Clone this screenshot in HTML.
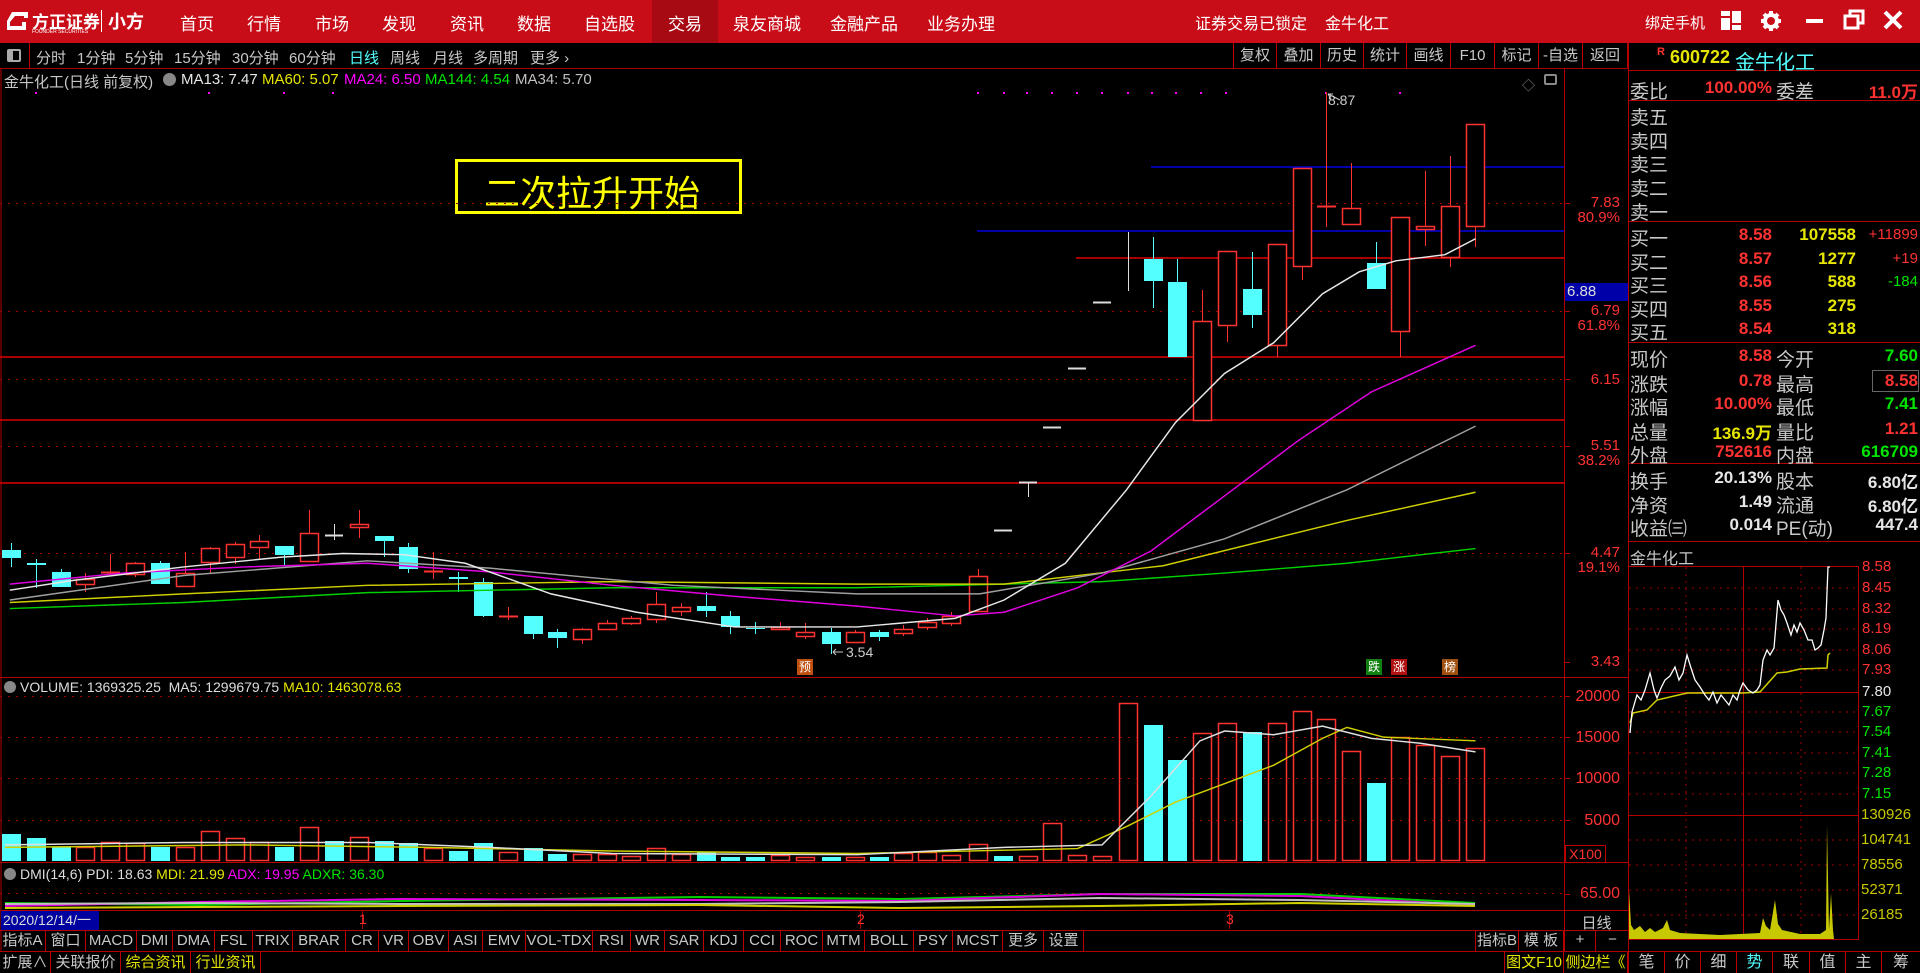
<!DOCTYPE html>
<html><head><meta charset="utf-8">
<style>
*{margin:0;padding:0;box-sizing:border-box}
body{width:1920px;height:973px;background:#000;overflow:hidden;position:relative;font-family:"Liberation Sans","Noto Sans CJK SC",sans-serif;color:#c8c8c8}
.a{position:absolute;white-space:nowrap}
#top{position:absolute;left:0;top:0;width:1920px;height:43px;background:#c80d18}
.nav{position:absolute;top:10px;font-size:17px;color:#fff}
#tb{position:absolute;left:0;top:43px;width:1628px;height:26px;border-bottom:1px solid #a00;font-size:15px}
.ti{position:absolute;top:4px;color:#c8c8c8}
.rb{position:absolute;top:0;height:25px;border-left:1px solid #b00;font-size:15px;text-align:center;line-height:25px;color:#c8c8c8}
.rp{position:absolute;font-size:19px;line-height:22px}
.lab{color:#c8c8c8}
.num{font-weight:bold;font-size:17px}
.r{color:#ff3232}.y{color:#e6e600}.g{color:#00e600}.w{color:#e6e6e6}.c{color:#54ffff}
.tab{position:absolute;top:931px;height:20px;border-right:1px solid #b00;font-size:15px;line-height:20px;text-align:center;color:#c8c8c8}
.bt{position:absolute;top:952px;height:21px;border-right:1px solid #b00;font-size:15px;line-height:21px;text-align:center}
.ax{position:absolute;font-size:15px;color:#ff3232;text-align:right;width:60px}
.iax{position:absolute;font-size:15px;left:1862px}
.bx{position:absolute;font-size:12px;color:#fff;width:16px;height:16px;text-align:center;line-height:16px}
</style></head><body>

<div id="top">
 <svg class="a" style="left:6px;top:10px" width="24" height="22" viewBox="0 0 24 22"><path d="M6 2h16v6h-4V6H9L4 12v4h12v-4h4v8H1V11z" fill="#fff"/></svg>
 <div class="a" style="left:32px;top:8px;font-size:17px;font-weight:bold;color:#fff">方正证券</div>
 <div class="a" style="left:32px;top:29px;font-size:5px;color:#fff">FOUNDER SECURITIES</div>
 <div class="a" style="left:101px;top:10px;width:1px;height:22px;background:#fff"></div>
 <div class="a" style="left:108px;top:8px;font-size:18px;font-weight:bold;color:#fff">小方</div>
 <div class="nav" style="left:180px">首页</div>
 <div class="nav" style="left:247px">行情</div>
 <div class="nav" style="left:315px">市场</div>
 <div class="nav" style="left:382px">发现</div>
 <div class="nav" style="left:450px">资讯</div>
 <div class="nav" style="left:517px">数据</div>
 <div class="nav" style="left:584px">自选股</div>
 <div class="a" style="left:652px;top:0;width:66px;height:43px;background:#a80a14"></div>
 <div class="nav" style="left:668px">交易</div>
 <div class="nav" style="left:733px">泉友商城</div>
 <div class="nav" style="left:830px">金融产品</div>
 <div class="nav" style="left:927px">业务办理</div>
 <div class="nav" style="left:1195px;font-size:16px">证券交易已锁定</div>
 <div class="nav" style="left:1325px;font-size:16px">金牛化工</div>
 <div class="nav" style="left:1645px;font-size:15px;top:12px">绑定手机</div>
 <svg class="a" style="left:1720px;top:10px" width="22" height="22"><rect x="1" y="1" width="9" height="5" fill="#fff"/><rect x="1" y="8" width="9" height="12" fill="#fff"/><rect x="12" y="1" width="9" height="12" fill="#fff"/><rect x="12" y="15" width="9" height="5" fill="#fff"/></svg>
 <svg class="a" style="left:1760px;top:10px" width="22" height="22" viewBox="0 0 22 22"><circle cx="11" cy="11" r="6" fill="none" stroke="#fff" stroke-width="4"/><g stroke="#fff" stroke-width="4"><path d="M11 1v4M11 17v4M1 11h4M17 11h4M4 4l3 3M15 15l3 3M18 4l-3 3M4 18l3-3"/></g></svg>
 <div class="a" style="left:1806px;top:19px;width:17px;height:4px;background:#fff"></div>
 <svg class="a" style="left:1843px;top:9px" width="22" height="22"><rect x="2" y="7" width="13" height="12" fill="none" stroke="#fff" stroke-width="3"/><path d="M7 7V2h13v12h-5" fill="none" stroke="#fff" stroke-width="3"/></svg>
 <svg class="a" style="left:1883px;top:10px" width="20" height="20"><path d="M2 2L18 18M18 2L2 18" stroke="#fff" stroke-width="4"/></svg>
</div>

<div id="tb">
 <div class="a" style="left:7px;top:6px;width:14px;height:13px;border:2px solid #aaa;border-radius:2px"></div>
 <div class="a" style="left:8px;top:8px;width:5px;height:9px;background:#aaa"></div>
 <div class="a" style="left:29px;top:0;width:1px;height:26px;background:#b00"></div>
 <div class="ti" style="left:36px">分时</div>
 <div class="ti" style="left:77px">1分钟</div>
 <div class="ti" style="left:125px">5分钟</div>
 <div class="ti" style="left:174px">15分钟</div>
 <div class="ti" style="left:232px">30分钟</div>
 <div class="ti" style="left:289px">60分钟</div>
 <div class="ti c" style="left:349px">日线</div>
 <div class="ti" style="left:390px">周线</div>
 <div class="ti" style="left:433px">月线</div>
 <div class="ti" style="left:473px">多周期</div>
 <div class="ti" style="left:530px">更多 ›</div>
 <div class="rb" style="left:1233px;width:43px">复权</div>
 <div class="rb" style="left:1276px;width:44px">叠加</div>
 <div class="rb" style="left:1320px;width:43px">历史</div>
 <div class="rb" style="left:1363px;width:43px">统计</div>
 <div class="rb" style="left:1406px;width:44px">画线</div>
 <div class="rb" style="left:1450px;width:44px">F10</div>
 <div class="rb" style="left:1494px;width:44px">标记</div>
 <div class="rb" style="left:1538px;width:44px">-自选</div>
 <div class="rb" style="left:1582px;width:46px;border-right:1px solid #b00">返回</div>
</div>

<!-- title line -->
<div class="a" style="left:4px;top:71px;font-size:15px;color:#c8c8c8">金牛化工(日线 前复权)</div>
<div class="a" style="left:163px;top:73px;width:13px;height:13px;border-radius:50%;background:#888"></div>
<div class="a w" style="left:181px;top:71px;font-size:15px">MA13: 7.47</div>
<div class="a y" style="left:262px;top:71px;font-size:15px">MA60: 5.07</div>
<div class="a" style="left:344px;top:71px;font-size:15px;color:#ff00ff">MA24: 6.50</div>
<div class="a g" style="left:425px;top:71px;font-size:15px">MA144: 4.54</div>
<div class="a" style="left:515px;top:71px;font-size:15px;color:#c0c0c0">MA34: 5.70</div>

<div class="a" style="left:455px;top:159px;width:287px;height:55px;border:3px solid #ffff00"></div>
<div class="a" style="left:484px;top:165px;font-size:36px;color:#ffff00">二次拉升开始</div>

<svg class="a" style="left:0;top:0" width="1920" height="973" id="sv">
 <!-- frames -->
 <g stroke="#b00000" fill="none">
  <line x1="1564.5" y1="69" x2="1564.5" y2="952"/>
  <line x1="1628.5" y1="43" x2="1628.5" y2="973"/>
  <line x1="0" y1="677.5" x2="1628" y2="677.5"/>
  <line x1="0" y1="862.5" x2="1628" y2="862.5"/>
  <line x1="0" y1="910.5" x2="1628" y2="910.5"/>
  <line x1="0" y1="930.5" x2="1628" y2="930.5"/>
  <line x1="0" y1="951.5" x2="1920" y2="951.5"/>
  <line x1="1" y1="69" x2="1" y2="952"/>
  <line x1="1628" y1="70.5" x2="1920" y2="70.5"/>
  <line x1="1628" y1="100.5" x2="1920" y2="100.5"/>
  <line x1="1628" y1="221.5" x2="1920" y2="221.5"/>
  <line x1="1628" y1="342.5" x2="1920" y2="342.5"/>
  <line x1="1628" y1="463.5" x2="1920" y2="463.5"/>
  <line x1="1628" y1="541.5" x2="1920" y2="541.5"/>
 </g>
 <!-- dotted grid -->
 <g stroke="#a00000" stroke-dasharray="2,6">
  <line x1="0" y1="203.5" x2="1564" y2="203.5"/><line x1="0" y1="311.5" x2="1564" y2="311.5"/>
  <line x1="0" y1="379.5" x2="1564" y2="379.5"/><line x1="0" y1="446.5" x2="1564" y2="446.5"/>
  <line x1="0" y1="553.5" x2="1564" y2="553.5"/>
  <line x1="0" y1="696.5" x2="1564" y2="696.5"/><line x1="0" y1="737.5" x2="1564" y2="737.5"/>
  <line x1="0" y1="778.5" x2="1564" y2="778.5"/><line x1="0" y1="820.5" x2="1564" y2="820.5"/>
  <line x1="0" y1="893.5" x2="1564" y2="893.5"/>
 </g>
 <!-- axis ticks -->
 <g stroke="#b00000"><path d="M1564 203.5h6M1564 311.5h6M1564 379.5h6M1564 446.5h6M1564 553.5h6M1564 662.5h6M1564 696.5h6M1564 737.5h6M1564 778.5h6M1564 820.5h6M1564 894.5h6M362.5 911v18M860.5 911v18M1229.5 911v18"/></g>
 <!-- horizontal marker lines -->
 <g stroke="#e00000" stroke-width="1.5">
  <line x1="1076" y1="258" x2="1564" y2="258"/>
  <line x1="0" y1="357" x2="1564" y2="357"/>
  <line x1="0" y1="420" x2="1564" y2="420"/>
  <line x1="0" y1="483" x2="1564" y2="483"/>
 </g>
 <g stroke="#0000e0" stroke-width="1.5">
  <line x1="1151" y1="167" x2="1564" y2="167"/>
  <line x1="977" y1="231" x2="1564" y2="231"/>
 </g>
 <g id="dots" fill="#ff00ff"></g>
 <g id="cands"></g>
 <g id="vols"></g>
 <!-- MA lines (perceived coords scaled) -->
 <g transform="scale(1.2245)" fill="none" stroke-width="1.2" vector-effect="non-scaling-stroke">
  <polyline stroke="#00d000" points="8,497 150,492 300,484 500,480 700,480 900,475 1000,468 1100,460 1205,448"/>
  <polyline stroke="#d0d000" points="8,492 150,485 300,478 500,475 700,477 820,477 950,462 1100,425 1205,402"/>
  <polyline stroke="#a0a0a0" points="8,490 150,470 300,458 400,464 550,478 700,485 800,485 900,468 1000,440 1100,400 1205,348"/>
  <polyline stroke="#e000e0" points="8,477 100,468 200,463 300,460 400,467 500,478 600,487 700,495 780,503 820,500 880,480 940,450 1000,405 1060,360 1120,320 1205,282"/>
  <polyline stroke="#e8e8e8" points="8,482 60,474 150,463 230,455 280,452 330,453 380,460 450,485 520,500 600,512 700,512 780,505 820,490 870,460 920,400 960,345 1000,305 1040,280 1080,240 1110,222 1140,213 1180,208 1205,195"/>
  <polyline stroke="#d0d000" points="4,692 200,690 350,692 500,695 700,697 880,693 920,675 960,655 1000,640 1040,625 1080,603 1100,594 1130,602 1205,605"/>
  <polyline stroke="#e0e0e0" points="4,690 150,688 300,688 400,692 500,697 700,698 820,692 900,690 940,650 980,605 1000,597 1040,600 1080,593 1120,603 1160,607 1205,614"/>
 </g>
 <!-- DMI lines -->
 <g fill="none" stroke-width="2">
  <polyline stroke="#00d000" points="5,903 200,905 400,901 700,897 900,899 1100,894 1300,894 1475,903"/>
  <polyline stroke="#e000e0" points="5,906 200,902 400,899 700,900 900,901 1100,894 1300,896 1475,905"/>
  <polyline stroke="#c0c0c0" points="5,904 200,903 400,904 700,904 900,902 1100,898 1300,900 1475,904"/>
  <polyline stroke="#d0d000" points="5,908 200,907 400,906 700,905 900,908 1100,906 1300,903 1475,906"/>
 </g>
 <!-- 8.87 / 3.54 arrows -->
 <path d="M1328 94l12 6M1328 94l3 5M1328 94l5 0" stroke="#ccc" fill="none"/>
 <path d="M833 652h10M833 652l3-3M833 652l3 3" stroke="#ccc" fill="none"/>
 <!-- intraday chart -->
 <g stroke="#b00000" fill="none">
  <rect x="1628.5" y="566.5" width="230" height="373"/>
  <line x1="1628" y1="692.5" x2="1858" y2="692.5"/>
  <line x1="1628" y1="815.5" x2="1858" y2="815.5"/>
  <line x1="1743.5" y1="567" x2="1743.5" y2="939"/>
 </g>
 <g stroke="#a00000" stroke-dasharray="2,5">
  <path d="M1629 588h229M1629 609h229M1629 629h229M1629 650h229M1629 670h229M1629 712h229M1629 732h229M1629 753h229M1629 773h229M1629 794h229M1629 840h229M1629 865h229M1629 890h229M1629 915h229M1686 567v372M1801 567v372"/>
 </g>
 <polyline fill="none" stroke="#d0d000" stroke-width="1.5" points="1630,723 1633,713 1647,710 1657,700 1687,693 1743,693 1760,692 1777,673 1787,672 1800,669 1827,668 1828,655 1830,653"/>
 <polyline fill="none" stroke="#fff" stroke-width="1.3" points="1630,733 1632,712 1637,695 1641,700 1645,690 1650,673 1654,690 1657,698 1661,688 1665,680 1670,676 1675,667 1679,680 1683,673 1687,655 1691,668 1695,680 1700,687 1705,695 1709,700 1713,692 1717,703 1721,695 1725,700 1729,705 1733,695 1737,700 1740,690 1743,683 1748,690 1753,693 1757,690 1760,685 1763,660 1767,650 1770,655 1774,648 1778,600 1781,610 1784,615 1787,623 1791,635 1794,625 1797,632 1800,623 1804,630 1808,640 1812,640 1815,650 1818,648 1821,645 1824,630 1826,618 1828,567 1830,567"/>
 <path fill="#c8c800" d="M1629 939V890L1631 925L1634 930L1640 926L1645 932L1650 928L1655 932L1663 928L1667 920L1670 930L1680 933L1700 934L1720 935L1740 934L1760 933L1763 918L1766 926L1770 930L1775 900L1778 924L1782 930L1800 934L1820 934L1826 930L1827 825L1829 930L1831 893L1833 930L1834 939Z"/>
</svg>

<div class="a" style="left:1328px;top:92px;font-size:14px;color:#ccc">8.87</div>
<div class="a" style="left:846px;top:644px;font-size:14px;color:#ccc">3.54</div>
<div class="bx" style="left:797px;top:659px;background:#c05010">预</div>
<div class="bx" style="left:1366px;top:659px;background:#108010">跌</div>
<div class="bx" style="left:1391px;top:659px;background:#b01010">涨</div>
<div class="bx" style="left:1442px;top:659px;background:#a05010">榜</div>
<div class="a" style="left:1522px;top:75px;font-size:13px;color:#888">◇</div>
<div class="a" style="left:1544px;top:74px;width:13px;height:11px;border:2px solid #888;border-radius:2px"></div>

<!-- price axis -->
<div class="ax" style="left:1560px;top:194px">7.83</div>
<div class="ax" style="left:1560px;top:209px">80.9%</div>
<div class="a" style="left:1565px;top:283px;width:63px;height:18px;background:#0000a8;font-size:15px;color:#ddd;line-height:18px;padding-left:2px">6.88</div>
<div class="ax" style="left:1560px;top:302px">6.79</div>
<div class="ax" style="left:1560px;top:317px">61.8%</div>
<div class="ax" style="left:1560px;top:371px">6.15</div>
<div class="ax" style="left:1560px;top:437px">5.51</div>
<div class="ax" style="left:1560px;top:452px">38.2%</div>
<div class="ax" style="left:1560px;top:544px">4.47</div>
<div class="ax" style="left:1560px;top:559px">19.1%</div>
<div class="ax" style="left:1560px;top:653px">3.43</div>
<div class="ax" style="left:1560px;top:688px;font-size:16px">20000</div>
<div class="ax" style="left:1560px;top:729px;font-size:16px">15000</div>
<div class="ax" style="left:1560px;top:770px;font-size:16px">10000</div>
<div class="ax" style="left:1560px;top:812px;font-size:16px">5000</div>
<div class="a" style="left:1565px;top:845px;width:41px;height:18px;border:1px solid #b00;font-size:14px;color:#ff3232;line-height:16px;text-align:center">X100</div>
<div class="ax" style="left:1560px;top:885px;font-size:16px">65.00</div>
<div class="a" style="left:1565px;top:912px;width:63px;text-align:center;font-size:15px">日线</div>
<div class="a" style="left:1565px;top:931px;width:31px;height:20px;border-right:1px solid #b00;text-align:center;font-size:15px">+</div>
<div class="a" style="left:1597px;top:931px;width:31px;text-align:center;font-size:15px">−</div>

<!-- volume/dmi titles -->
<div class="a" style="left:4px;top:681px;width:12px;height:12px;border-radius:50%;background:#888"></div>
<div class="a" style="left:20px;top:679px;font-size:14px;color:#ddd">VOLUME: 1369325.25 &nbsp;MA5: 1299679.75 <span class="y">MA10: 1463078.63</span></div>
<div class="a" style="left:4px;top:868px;width:12px;height:12px;border-radius:50%;background:#888"></div>
<div class="a" style="left:20px;top:866px;font-size:14px;color:#ddd">DMI(14,6) PDI: 18.63 <span class="y">MDI: 21.99</span> <span style="color:#ff00ff">ADX: 19.95</span> <span class="g">ADXR: 36.30</span></div>

<!-- date row -->
<div class="a" style="left:1px;top:911px;width:98px;height:19px;background:#0000a0;color:#ddd;font-size:14px;line-height:19px;padding-left:2px">2020/12/14/一</div>
<div class="a r" style="left:359px;top:911px;font-size:14px">1</div>
<div class="a r" style="left:857px;top:911px;font-size:14px">2</div>
<div class="a r" style="left:1226px;top:911px;font-size:14px">3</div>

<!-- tabs -->
<div class="tab" style="left:0;width:46px">指标A</div>
<div class="tab" style="left:46px;width:40px">窗口</div>
<div class="tab" style="left:86px;width:51px">MACD</div>
<div class="tab c" style="left:137px;width:36px">DMI</div>
<div class="tab" style="left:173px;width:42px">DMA</div>
<div class="tab" style="left:215px;width:38px">FSL</div>
<div class="tab" style="left:253px;width:40px">TRIX</div>
<div class="tab" style="left:293px;width:53px">BRAR</div>
<div class="tab" style="left:346px;width:33px">CR</div>
<div class="tab" style="left:379px;width:30px">VR</div>
<div class="tab" style="left:409px;width:40px">OBV</div>
<div class="tab" style="left:449px;width:34px">ASI</div>
<div class="tab" style="left:483px;width:43px">EMV</div>
<div class="tab" style="left:526px;width:67px">VOL-TDX</div>
<div class="tab" style="left:593px;width:38px">RSI</div>
<div class="tab" style="left:631px;width:34px">WR</div>
<div class="tab" style="left:665px;width:39px">SAR</div>
<div class="tab" style="left:704px;width:40px">KDJ</div>
<div class="tab" style="left:744px;width:37px">CCI</div>
<div class="tab" style="left:781px;width:42px">ROC</div>
<div class="tab" style="left:823px;width:42px">MTM</div>
<div class="tab" style="left:865px;width:49px">BOLL</div>
<div class="tab" style="left:914px;width:39px">PSY</div>
<div class="tab" style="left:953px;width:50px">MCST</div>
<div class="tab" style="left:1003px;width:41px">更多</div>
<div class="tab" style="left:1044px;width:40px">设置</div>
<div class="tab" style="left:1475px;width:44px;border-left:1px solid #b00">指标B</div>
<div class="tab" style="left:1519px;width:45px">模 板</div>

<div class="bt" style="left:0;width:51px">扩展∧</div>
<div class="bt" style="left:51px;width:70px">关联报价</div>
<div class="bt y" style="left:121px;width:70px">综合资讯</div>
<div class="bt y" style="left:191px;width:70px">行业资讯</div>
<div class="bt y" style="left:1504px;width:60px;border-left:1px solid #b00">图文F10</div>
<div class="bt y" style="left:1564px;width:64px">侧边栏《</div>
<div class="bt" style="left:1629px;width:36px;font-size:16px">笔</div>
<div class="bt" style="left:1665px;width:36px;font-size:16px">价</div>
<div class="bt" style="left:1701px;width:36px;font-size:16px">细</div>
<div class="bt c" style="left:1737px;width:36px;font-size:16px">势</div>
<div class="bt" style="left:1773px;width:37px;font-size:16px">联</div>
<div class="bt" style="left:1810px;width:36px;font-size:16px">值</div>
<div class="bt" style="left:1846px;width:36px;font-size:16px">主</div>
<div class="bt" style="left:1882px;width:38px;font-size:16px;border-right:none">筹</div>

<!-- right panel -->
<div class="a" style="left:1657px;top:46px;font-size:11px;color:#ff3232;font-weight:bold">R</div>
<div class="a" style="left:1670px;top:47px;font-size:18px;color:#e6e600;font-weight:bold">600722</div>
<div class="a c" style="left:1735px;top:46px;font-size:20px">金牛化工</div>
<div id="rpanel"></div>
<div class="a" style="left:1630px;top:545px;font-size:16px">金牛化工</div>
<div class="iax r" style="top:558px">8.58</div>
<div class="iax r" style="top:579px">8.45</div>
<div class="iax r" style="top:600px">8.32</div>
<div class="iax r" style="top:620px">8.19</div>
<div class="iax r" style="top:641px">8.06</div>
<div class="iax r" style="top:661px">7.93</div>
<div class="iax w" style="top:683px">7.80</div>
<div class="iax g" style="top:703px">7.67</div>
<div class="iax g" style="top:723px">7.54</div>
<div class="iax g" style="top:744px">7.41</div>
<div class="iax g" style="top:764px">7.28</div>
<div class="iax g" style="top:785px">7.15</div>
<div class="iax" style="top:806px;color:#c8c800;left:1861px">130926</div>
<div class="iax" style="top:831px;color:#c8c800;left:1861px">104741</div>
<div class="iax" style="top:856px;color:#c8c800;left:1861px">78556</div>
<div class="iax" style="top:881px;color:#c8c800;left:1861px">52371</div>
<div class="iax" style="top:906px;color:#c8c800;left:1861px">26185</div>

<script>
var NS="http://www.w3.org/2000/svg";
function el(p,t,a){var e=document.createElementNS(NS,t);for(var k in a)e.setAttribute(k,a[k]);p.appendChild(e);return e;}
var C=[[11,'c',550,558,543,567],[36,'c',563,565,559,588],[61,'c',572,587,569,587],[85,'r',579,585,573,592],[110,'r',572,574,554,574],[135,'r',563,575,562,577],[160,'c',563,584,561,584],[185,'r',573,587,552,587],[210,'r',548,563,547,573],[235,'r',544,558,542,564],[259,'r',541,548,535,559],[284,'c',546,555,546,565],[309,'r',533,562,510,562],[334,'w',535,535,524,540],[359,'r',524,528,510,538],[384,'c',536,541,536,557],[408,'c',547,569,543,573],[433,'r',571,573,552,579],[458,'c',577,579,572,592],[483,'c',582,616,578,617],[508,'r',616,618,607,620],[533,'c',616,634,616,639],[557,'c',632,638,629,648],[582,'r',629,640,628,644],[607,'r',623,630,620,630],[631,'r',618,624,616,625],[656,'r',604,620,592,623],[681,'r',607,612,603,616],[706,'c',606,611,592,617],[730,'c',616,627,611,634],[755,'c',628,629,622,634],[780,'r',627,630,622,630],[805,'r',632,637,623,639],[831,'c',632,644,628,654],[855,'r',632,643,630,643],[879,'c',632,637,630,641],[903,'r',629,634,625,636],[927,'r',622,628,618,630],[951,'r',616,624,612,626],[978,'r',576,612,569,612],[1003,'w',530,530,530,530],[1028,'w',482,482,482,497],[1052,'w',427,427,427,427],[1077,'w',368,368,368,368],[1102,'w',302,302,302,302],[1128,'v',232,291,232,291],[1153,'c',259,281,237,308],[1177,'c',282,357,259,357],[1202,'r',321,421,290,421],[1227,'r',251,326,251,342],[1252,'c',289,315,252,328],[1277,'r',244,346,244,357],[1302,'r',168,267,168,280],[1326,'r',206,207,92,227],[1351,'r',208,225,163,225],[1376,'c',263,289,242,289],[1400,'r',217,332,217,357],[1425,'r',226,230,171,246],[1450,'r',206,258,156,267],[1475,'r',124,227,124,247]];
var g=document.getElementById('cands');
C.forEach(function(c){var x=c[0],t=c[1];
 if(t=='v'){el(g,'line',{x1:x+.5,x2:x+.5,y1:c[4],y2:c[5],stroke:'#ddd'});return;}
 if(t=='w'){el(g,'line',{x1:x-9,x2:x+9,y1:c[2]+.5,y2:c[2]+.5,stroke:'#ddd','stroke-width':2});if(c[5]>c[4])el(g,'line',{x1:x+.5,x2:x+.5,y1:c[4],y2:c[5],stroke:'#ddd'});return;}
 var col=t=='c'?'#54ffff':'#ff3232';
 el(g,'line',{x1:x+.5,x2:x+.5,y1:c[4],y2:c[5],stroke:col});
 var h=Math.max(c[3]-c[2],1);
 if(t=='c')el(g,'rect',{x:x-9,y:c[2],width:19,height:h,fill:col});
 else if(h<=2)el(g,'line',{x1:x-9,x2:x+10,y1:c[2]+.5,y2:c[2]+.5,stroke:col,'stroke-width':2});
 else el(g,'rect',{x:x-8.5,y:c[2]+.5,width:18,height:h-1,fill:'#000',stroke:col,'stroke-width':1.5});
});
var V=[[11,'c',834],[36,'c',838],[61,'c',847],[85,'r',847],[110,'r',842],[135,'r',843],[160,'c',847],[185,'r',847],[210,'r',831],[235,'r',838],[259,'r',842],[284,'c',847],[309,'r',827],[334,'c',841],[359,'r',837],[384,'c',841],[408,'c',843],[433,'r',848],[458,'c',851],[483,'c',843],[508,'r',852],[533,'c',848],[557,'c',854],[582,'r',854],[607,'r',854],[631,'r',856],[656,'r',848],[681,'r',854],[706,'c',852],[730,'c',857],[755,'c',857],[780,'r',855],[805,'r',857],[831,'c',857],[855,'r',857],[879,'c',857],[903,'r',853],[927,'r',852],[951,'r',855],[978,'r',844],[1003,'c',856],[1028,'r',856],[1052,'r',823],[1077,'r',855],[1102,'r',856],[1128,'r',703],[1153,'c',725],[1177,'c',760],[1202,'r',733],[1227,'r',723],[1252,'c',732],[1277,'r',723],[1302,'r',711],[1326,'r',719],[1351,'r',751],[1376,'c',783],[1400,'r',737],[1425,'r',745],[1450,'r',756],[1475,'r',748]];
var vg=document.getElementById('vols');
V.forEach(function(v){var x=v[0],col=v[1]=='c'?'#54ffff':'#ff3232',h=861-v[2];
 if(v[1]=='c')el(vg,'rect',{x:x-9,y:v[2],width:19,height:h,fill:col});
 else el(vg,'rect',{x:x-8.5,y:v[2]+.5,width:18,height:h-1,fill:'none',stroke:col,'stroke-width':1.5});
});
var dg=document.getElementById('dots');
[36,209,284,333,978,1004,1027,1052,1077,1102,1128,1152,1176,1201,1226,1326,1400].forEach(function(x){el(dg,'rect',{x:x-1,y:92,width:2,height:2});});
// right panel rows
var rp=document.getElementById('rpanel'),H='';
function row(y,l1,v1,c1,l2,v2,c2){H+='<div class="a lab" style="left:1630px;top:'+(y-11)+'px;font-size:19px">'+l1+'</div>';
 if(v1)H+='<div class="a num '+c1+'" style="left:1680px;width:92px;text-align:right;top:'+(y-10)+'px">'+v1+'</div>';
 if(l2)H+='<div class="a lab" style="left:1776px;top:'+(y-11)+'px;font-size:19px">'+l2+'</div>';
 if(v2)H+='<div class="a num '+c2+'" style="left:1830px;width:88px;text-align:right;top:'+(y-10)+'px">'+v2+'</div>';}
row(88,'委比','100.00%','r','委差','11.0万','r');
['卖五','卖四','卖三','卖二','卖一'].forEach(function(s,i){row(114+i*23.7,s);});
var B=[['买一','8.58','107558','+11899','r'],['买二','8.57','1277','+19','r'],['买三','8.56','588','-184','g'],['买四','8.55','275','',''],['买五','8.54','318','','']];
B.forEach(function(b,i){var y=235+i*23.6;row(y,b[0],b[1],'r');
 H+='<div class="a num y" style="left:1780px;width:76px;text-align:right;top:'+(y-10)+'px">'+b[2]+'</div>';
 if(b[3])H+='<div class="a '+b[4]+'" style="left:1856px;width:62px;text-align:right;top:'+(y-9)+'px;font-size:15px">'+b[3]+'</div>';});
row(356,'现价','8.58','r','今开','7.60','g');
row(381,'涨跌','0.78','r','最高','8.58','r');
row(404,'涨幅','10.00%','r','最低','7.41','g');
row(429,'总量','136.9万','y','量比','1.21','r');
row(452,'外盘','752616','r','内盘','616709','g');
row(478,'换手','20.13%','w','股本','6.80亿','w');
row(502,'净资','1.49','w','流通','6.80亿','w');
row(525,'收益㈢','0.014','w','PE(动)','447.4','w');
H+='<div class="a" style="left:1872px;top:370px;width:47px;height:22px;border:1px solid #666"></div>';
rp.innerHTML=H;
</script>
</body></html>
